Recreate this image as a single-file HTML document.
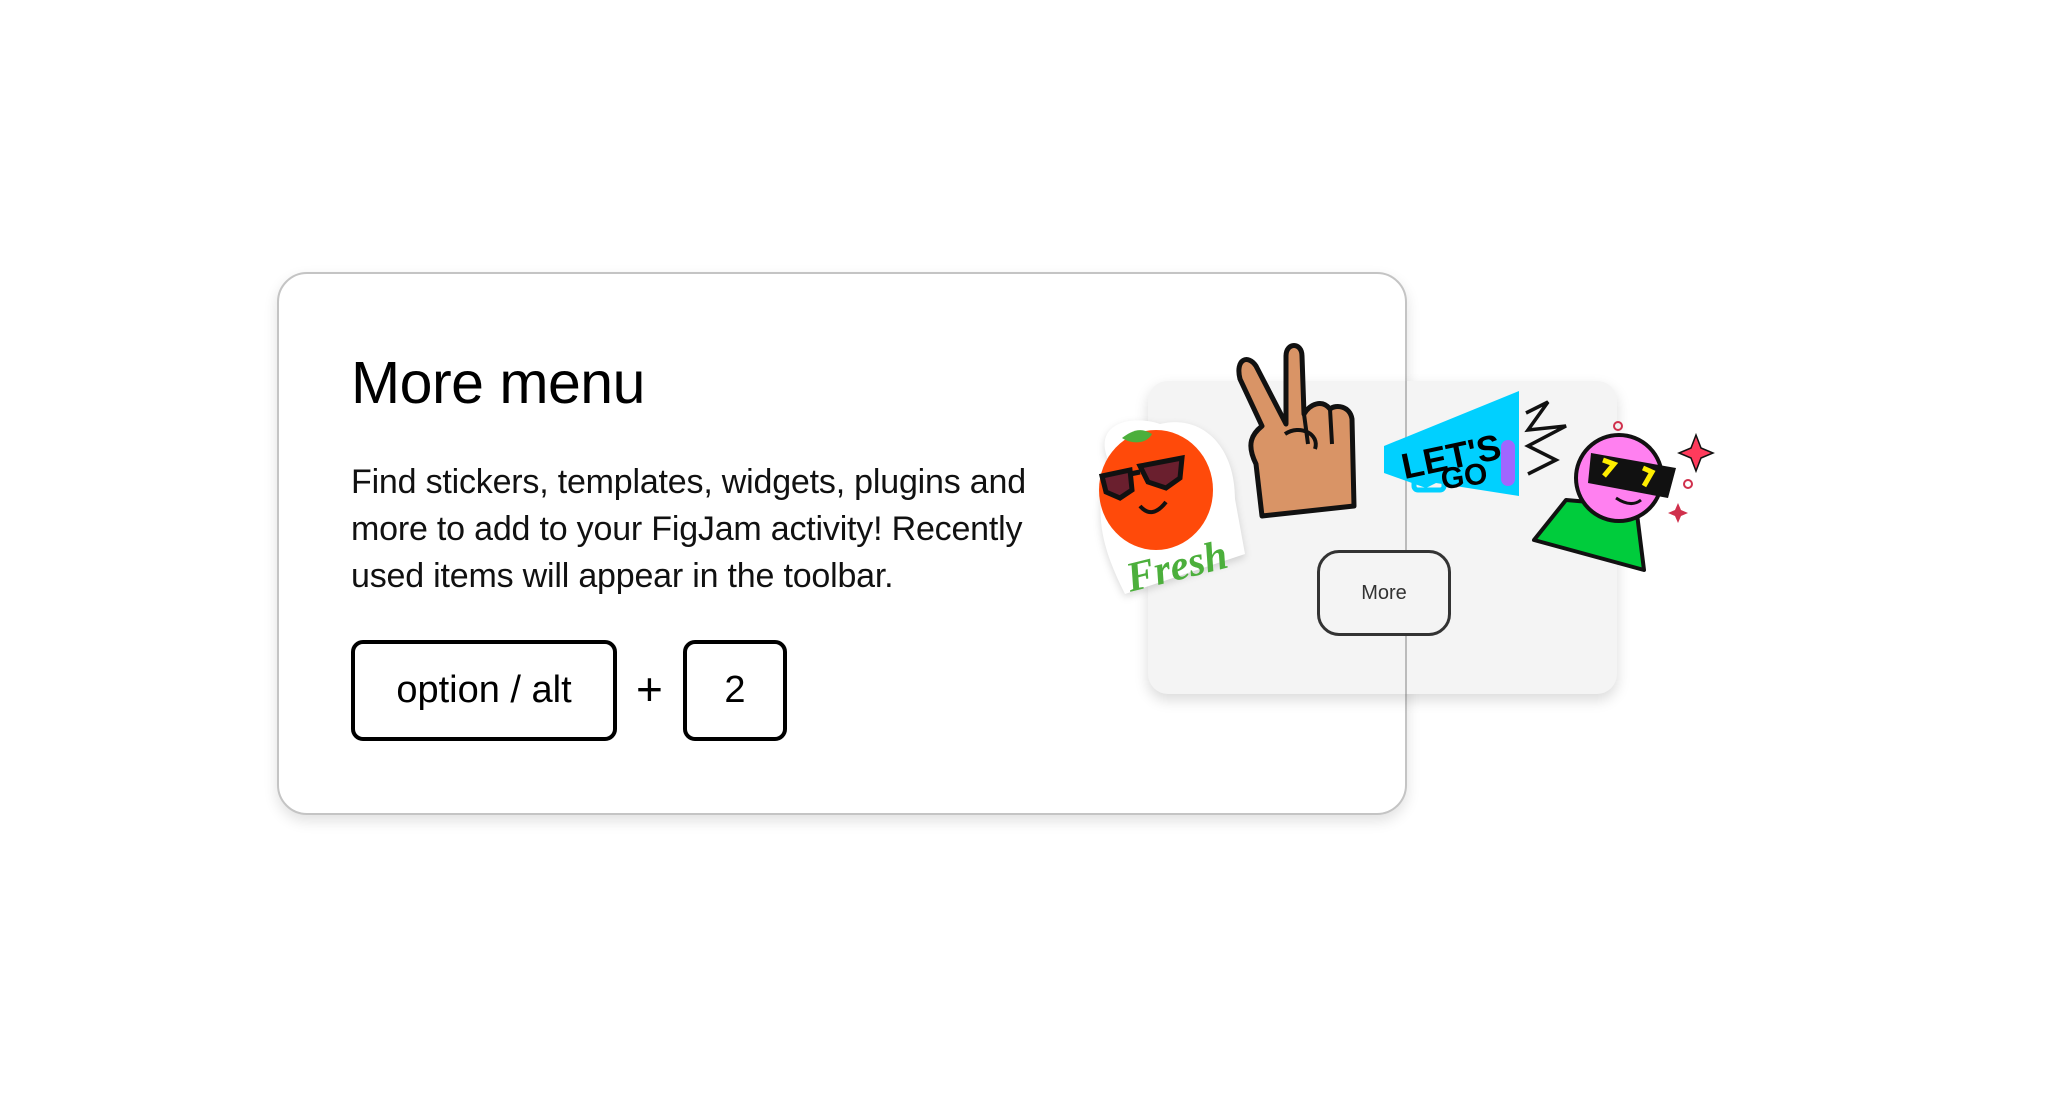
<!DOCTYPE html>
<html><head><meta charset="utf-8"><style>
html,body{margin:0;padding:0;background:#fff;width:2050px;height:1097px;overflow:hidden;font-family:"Liberation Sans",sans-serif;}
.card{position:absolute;left:277px;top:272px;width:1130px;height:543px;border:2px solid #c4c4c4;border-radius:30px;background:#fff;box-shadow:0 6px 14px rgba(0,0,0,0.12);box-sizing:border-box;}
.title{position:absolute;left:351px;top:349px;font-size:59px;color:#000;letter-spacing:-0.5px;}
.body{position:absolute;left:351px;top:459px;width:730px;font-size:34px;line-height:47px;color:#111;letter-spacing:-0.2px;}
.key{position:absolute;top:640px;height:101px;border:4px solid #000;border-radius:12px;box-sizing:border-box;display:flex;align-items:center;justify-content:center;font-size:38px;color:#000;}
.plus{position:absolute;left:636px;top:662px;font-size:46px;}
.panel{position:absolute;left:1148px;top:381px;width:469px;height:313px;background:#f4f4f4;border-radius:20px;box-shadow:0 6px 14px rgba(0,0,0,0.15);}
.vline{position:absolute;left:1405px;top:381px;width:2px;height:313px;background:#bbb;}
.more{position:absolute;left:1317px;top:550px;width:134px;height:86px;border:3px solid #333;border-radius:22px;box-sizing:border-box;display:flex;align-items:center;justify-content:center;font-size:20px;color:#333;background:#f4f4f4;}
svg{position:absolute;left:0;top:0;}
</style></head><body>
<div class="card"></div>
<div class="title">More menu</div>
<div class="body">Find stickers, templates, widgets, plugins and more to add to your FigJam activity! Recently used items will appear in the toolbar.</div>
<div class="key" style="left:351px;width:266px">option / alt</div>
<div class="plus">+</div>
<div class="key" style="left:683px;width:104px">2</div>
<div class="panel"></div>
<div class="vline"></div>
<div class="more">More</div>
<svg width="2050" height="1097" viewBox="0 0 2050 1097">
<g transform="translate(-10,-6)">
 <g>
  <path d="M1120 470 C1100 430 1140 420 1170 430 C1210 420 1245 450 1245 505 L1255 560 L1135 600 C1115 560 1100 520 1120 470Z" fill="#fff" filter="drop-shadow(0 3px 4px rgba(0,0,0,0.15))"/>
  <ellipse cx="1166" cy="496" rx="57" ry="60" fill="#ff4a0a"/>
  <path d="M1162 440 C1150 432 1140 438 1132 444 C1145 452 1158 448 1162 440Z" fill="#4caf3c"/>
  <path d="M1112 482 L1140 476 L1142 496 L1130 504 L1116 498Z M1150 472 L1192 464 L1190 484 L1176 494 L1158 488Z M1140 480 L1150 478" fill="#6a1f2e" stroke="#111" stroke-width="5"/>
  <path d="M1150 512 Q1162 526 1176 508" stroke="#111" stroke-width="4" fill="none"/>
  <text x="1135" y="585" transform="rotate(-14 1190 570)" font-family="Liberation Serif,serif" font-weight="bold" font-style="italic" font-size="42" fill="#4caf3c">Fresh</text>
 </g>
 <path d="M1272 522 L1266 470 C1256 450 1262 440 1272 432 L1250 385 C1245 365 1258 360 1266 372 L1296 430 L1296 362 C1296 348 1312 348 1312 362 L1314 420 C1320 410 1332 405 1340 415 C1346 410 1360 412 1362 425 L1364 512 Z" fill="#d99466" stroke="#111" stroke-width="5" stroke-linejoin="round"/>
 <path d="M1295 440 C1310 430 1330 440 1325 455 M1314 420 L1318 450 M1340 415 L1342 450" stroke="#111" stroke-width="4" fill="none"/>
</g>
<g transform="translate(-4,-2)">
 <path d="M1388 448 L1523 393 L1523 498 L1440 485 L1430 490 L1388 475Z" fill="#00d0ff"/>
 <rect x="1418" y="478" width="30" height="14" rx="4" fill="none" stroke="#00d0ff" stroke-width="5"/>
 <text x="1405" y="472" font-family="Liberation Sans,sans-serif" font-weight="bold" font-size="36" fill="#000" transform="rotate(-12 1450 460)">LET'S</text>
 <text x="1445" y="488" font-family="Liberation Sans,sans-serif" font-weight="bold" font-size="30" fill="#000" transform="rotate(-8 1470 480)">GO</text>
 <rect x="1505" y="442" width="14" height="46" rx="7" fill="#a066ff"/>
 <path d="M1530 415 L1552 404 L1532 432 L1570 428 L1532 448 L1560 462 L1532 476" stroke="#111" stroke-width="3.5" fill="none"/>
 <path d="M1538 542 L1570 502 L1640 508 L1648 572 Z" fill="#00cc3c" stroke="#111" stroke-width="4" stroke-linejoin="round"/>
 <ellipse cx="1623" cy="480" rx="43" ry="43" fill="#ff80f0" stroke="#111" stroke-width="4"/>
 <path d="M1595 455 L1680 470 L1672 500 L1592 485Z" fill="#111"/>
 <path d="M1607 462 L1618 466 L1608 478 M1647 470 L1656 474 L1648 488" stroke="#ffee00" stroke-width="5" fill="none"/>
 <path d="M1620 500 Q1635 510 1645 502" stroke="#111" stroke-width="3" fill="none"/>
 <path d="M1700 437 L1705 450 L1717 455 L1705 460 L1700 473 L1695 460 L1683 455 L1695 450Z" fill="#ff3b5c" stroke="#111" stroke-width="1.5"/>
 <circle cx="1622" cy="428" r="4" fill="none" stroke="#d0304c" stroke-width="2"/>
 <circle cx="1692" cy="486" r="4" fill="none" stroke="#d0304c" stroke-width="2"/>
 <path d="M1682 505 l3 7 7 3 -7 3 -3 7 -3 -7 -7 -3 7 -3z" fill="#d0304c"/>
</g>
</svg>
</body></html>
